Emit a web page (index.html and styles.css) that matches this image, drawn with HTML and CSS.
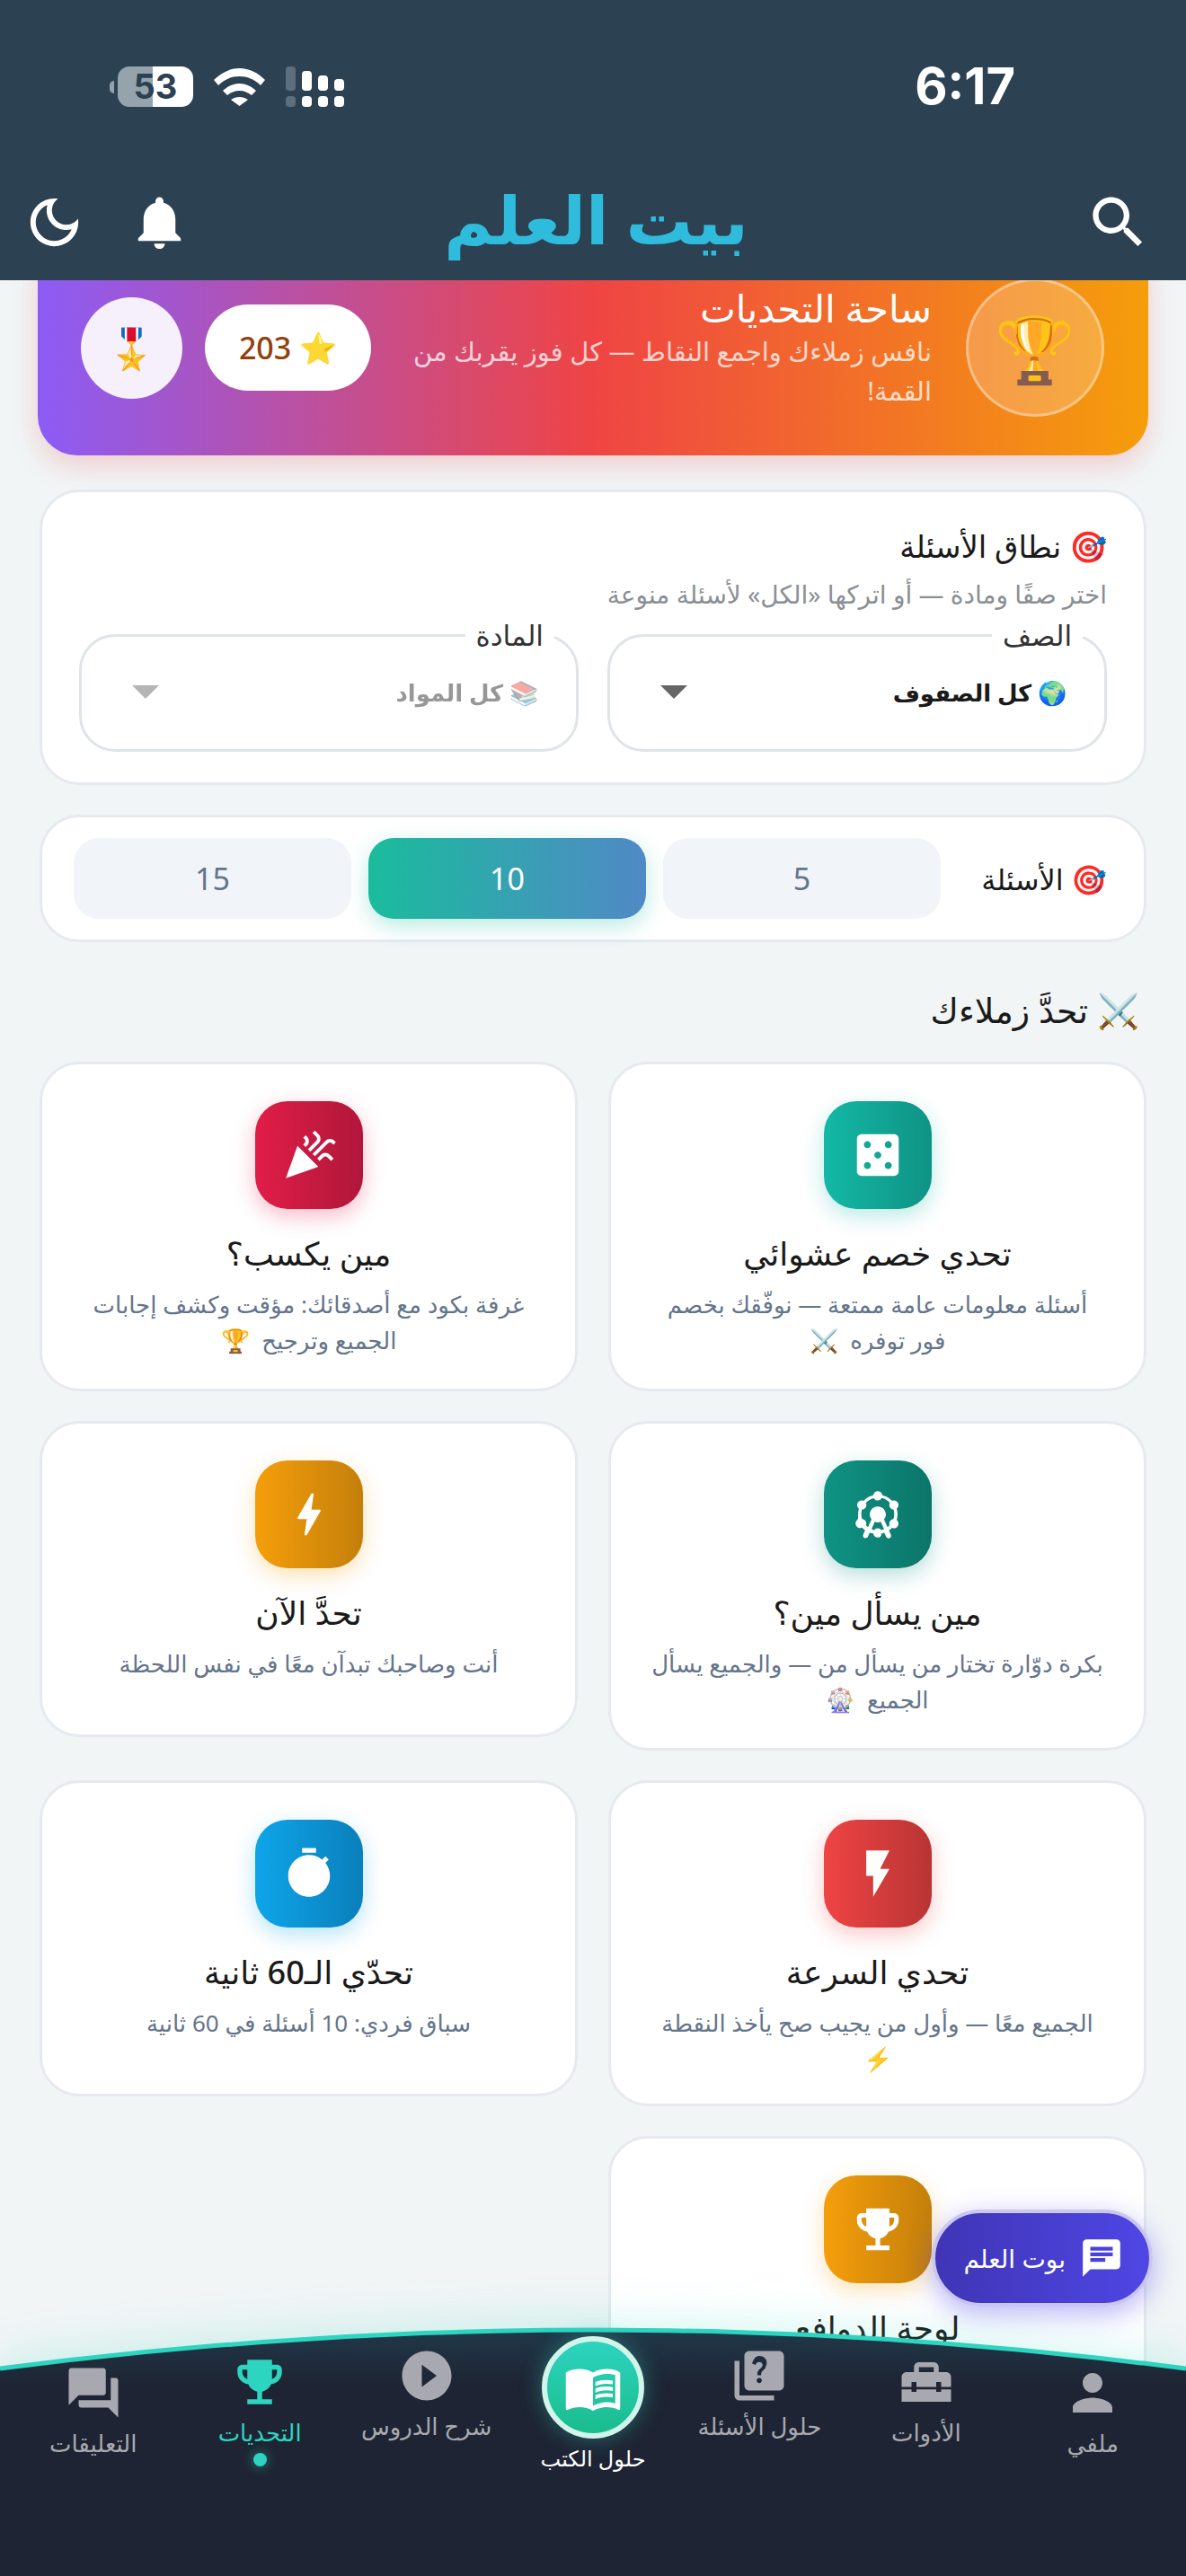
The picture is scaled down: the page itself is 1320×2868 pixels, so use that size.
FILE: index.html
```html
<!DOCTYPE html>
<html lang="ar" dir="rtl">
<head>
    <meta charset="UTF-8">
    <meta name="viewport" content="width=device-width, initial-scale=1.0">
    <title>بيت العلم</title>
    <link rel="stylesheet" href="styles.css">
</head>
<body>
<div class="app">
    <div class="topbar">
        <div class="status">
            <div class="status-icons">
                <div class="battery"><span class="battery-nub"></span><span class="battery-body">53</span></div>
                <svg class="wifi" viewBox="0 0 57 42"><path d="M0 13C8 5 18 0 28.500 0S49 5 57 13l-5 6C45 12 37 9 28.500 9S12 12 5 19z M10 25c5-5 12-8 18.500-8S42 20 47 25l-5 5c-4-3-8-5-13.500-5S19 27 15 30z M19 35c3-2 6-3 9.500-3s6.500 1 9.500 3l-9.500 7z" fill="#fff"/></svg>
                <div class="signal">
                    <div class="sig-col dim"><i class="h27"></i><b></b></div>
                    <div class="sig-col"><i class="h22"></i><b></b></div>
                    <div class="sig-col"><i class="h17"></i><b></b></div>
                    <div class="sig-col"><i class="h13"></i><b></b></div>
                </div>
            </div>
            <div class="time">6:17</div>
        </div>
        <div class="header">
            <div class="header-right">
                <svg class="ic-search" viewBox="0 0 24 24"><path d="M15.5 14h-.79l-.28-.27C15.41 12.59 16 11.11 16 9.500 16 5.910 13.090 3 9.500 3S3 5.910 3 9.500 5.910 16 9.500 16c1.610 0 3.090-.59 4.230-1.570l.27.28v.79l5 4.990L20.490 19l-4.990-5zm-6 0C7.010 14 5 11.990 5 9.500S7.010 5 9.500 5 14 7.010 14 9.500 11.990 14 9.500 14z"/></svg>
            </div>
            <h1 class="brand">بيت العلم</h1>
            <div class="header-left">
                <svg class="ic-head" viewBox="0 0 24 24"><path d="M12 22c1.100 0 2-.9 2-2h-4c0 1.100.89 2 2 2zm6-6v-5c0-3.070-1.640-5.640-4.500-6.320V4c0-.83-.67-1.500-1.500-1.500s-1.500.67-1.500 1.500v.68C7.630 5.360 6 7.920 6 11v5l-2 2v1h16v-1l-2-2z"/></svg>
                <svg class="ic-head" viewBox="0 0 24 24"><path d="M9.370 5.510C9.190 6.150 9.100 6.820 9.100 7.500c0 4.080 3.320 7.400 7.400 7.400.68 0 1.350-.09 1.990-.27C17.450 17.190 14.930 19 12 19c-3.860 0-7-3.140-7-7 0-2.930 1.810-5.450 4.370-6.490zM12 3c-4.970 0-9 4.030-9 9s4.030 9 9 9 9-4.030 9-9c0-.46-.04-.92-.1-1.360-.98 1.370-2.580 2.260-4.400 2.260-2.980 0-5.400-2.420-5.400-5.400 0-1.810.89-3.420 2.260-4.400-.44-.06-.9-.1-1.360-.1z"/></svg>
            </div>
        </div>
    </div>

    <div class="scroll">
        <div class="content">
            <div class="hero">
                <div class="hero-trophy">🏆</div>
                <div class="hero-text">
                    <h2>ساحة التحديات</h2>
                    <p>نافس زملاءك واجمع النقاط — كل فوز يقربك من<br>القمة!</p>
                </div>
                <div class="points"><span>⭐</span> 203</div>
                <div class="medal">🎖️</div>
            </div>

            <div class="card scope">
                <h3>🎯 نطاق الأسئلة</h3>
                <p class="scope-sub">اختر صفًا ومادة — أو اتركها «الكل» لأسئلة منوعة</p>
                <div class="selects">
                    <fieldset class="select">
                        <legend>الصف</legend>
                        <span>🌍 كل الصفوف</span>
                        <i class="arrow"></i>
                    </fieldset>
                    <fieldset class="select off">
                        <legend>المادة</legend>
                        <span>📚 كل المواد</span>
                        <i class="arrow"></i>
                    </fieldset>
                </div>
            </div>

            <div class="card count">
                <div class="count-label">🎯 الأسئلة</div>
                <div class="count-btn">5</div>
                <div class="count-btn active">10</div>
                <div class="count-btn">15</div>
            </div>

            <h3 class="section-title">⚔️ تحدَّ زملاءك</h3>

            <div class="games">
                <div class="game">
                    <div class="game-icon teal"><svg viewBox="0 0 24 24"><path d="M19 3H5c-1.100 0-2 .9-2 2v14c0 1.100.9 2 2 2h14c1.100 0 2-.9 2-2V5c0-1.100-.9-2-2-2zM7.500 18c-.83 0-1.500-.67-1.500-1.500S6.670 15 7.500 15s1.500.67 1.500 1.500S8.330 18 7.500 18zm0-9C6.670 9 6 8.330 6 7.500S6.670 6 7.500 6 9 6.670 9 7.500 8.330 9 7.500 9zm4.500 4.500c-.83 0-1.500-.67-1.500-1.500s.67-1.500 1.500-1.500 1.500.67 1.500 1.500-.67 1.500-1.500 1.500zm4.500 4.500c-.83 0-1.500-.67-1.500-1.500s.67-1.500 1.500-1.500 1.500.67 1.500 1.500-.67 1.500-1.500 1.500zm0-9c-.83 0-1.500-.67-1.500-1.500S15.670 6 16.500 6s1.500.67 1.500 1.500S17.330 9 16.500 9z"/></svg></div>
                    <h4>تحدي خصم عشوائي</h4>
                    <p>أسئلة معلومات عامة ممتعة — نوفّقك بخصم فور توفره &nbsp;⚔️</p>
                </div>
                <div class="game">
                    <div class="game-icon rose"><svg viewBox="0 0 24 24"><path d="M2 22l14-5-9-9zM14.530 12.530l5.590-5.590c.49-.49 1.280-.49 1.770 0l.59.59 1.060-1.060-.59-.59c-1.070-1.070-2.820-1.070-3.890 0l-5.590 5.590zM10.060 6.880l-.59.59 1.060 1.060.59-.59c1.070-1.070 1.070-2.820 0-3.890l-.59-.59-1.060 1.070.59.59c.48.48.48 1.280 0 1.760zM17.060 11.880l-1.590 1.590 1.060 1.060 1.590-1.590c.49-.49 1.280-.49 1.770 0l1.610 1.610 1.060-1.060-1.610-1.610c-1.080-1.070-2.820-1.070-3.890 0zM15.060 5.880l-3.590 3.590 1.060 1.060 3.590-3.590c1.070-1.070 1.070-2.820 0-3.890l-1.590-1.590-1.060 1.060 1.590 1.590c.48.49.48 1.290 0 1.770z"/></svg></div>
                    <h4>مين يكسب؟</h4>
                    <p>غرفة بكود مع أصدقائك: مؤقت وكشف إجابات الجميع وترجيح &nbsp;🏆</p>
                </div>
                <div class="game">
                    <div class="game-icon pine"><svg viewBox="0 0 24 24"><path d="M10.430 18.750C10.800 18.290 11.370 18 12 18c.63 0 1.190.29 1.560.75.39-.09.76-.21 1.120-.36l-1.420-3.180c-.39.15-.82.23-1.260.23-.46 0-.9-.09-1.300-.25l-1.430 3.170c.38.18.76.31 1.160.39zM5.150 10c-.16.59-.25 1.210-.25 1.850 0 .75.12 1.470.33 2.150.63.05 1.220.4 1.560.99.33.57.35 1.230.11 1.790.27.27.56.53.87.76l1.520-3.390c-.47-.58-.75-1.320-.75-2.130 0-1.890 1.550-3.410 3.460-3.410s3.460 1.530 3.460 3.410c0 .82-.29 1.570-.78 2.160l1.500 3.350c.32-.24.62-.5.9-.79-.22-.55-.2-1.200.12-1.750.33-.57.9-.92 1.520-.99.22-.68.34-1.410.34-2.160 0-.64-.09-1.270-.25-1.860-.64-.04-1.260-.39-1.600-1-.36-.62-.35-1.360-.03-1.950-.91-.98-2.100-1.710-3.440-2.050C13.390 5.600 12.740 6 12 6s-1.390-.41-1.740-1.010C8.920 5.330 7.730 6.040 6.820 7.020 7.150 7.620 7.170 8.370 6.800 9c-.35.62-.99.97-1.650 1zM3.850 9.580C3.070 8.980 2.830 7.880 3.340 7c.51-.88 1.580-1.230 2.490-.85 1.110-1.170 2.560-2.030 4.180-2.420C10.150 2.750 10.990 2 12 2s1.850.75 1.980 1.730c1.630.39 3.070 1.240 4.180 2.420.91-.38 1.990-.03 2.490.85.51.88.27 1.980-.51 2.580.23.77.35 1.580.35 2.420s-.12 1.650-.35 2.420c.78.6 1.020 1.700.51 2.580-.51.88-1.580 1.230-2.490.85-.4.43-.85.81-1.340 1.150l.81 1.800c.25.56 0 1.220-.56 1.470-.56.25-1.220 0-1.470-.56l-.81-1.800c-.47.19-.96.34-1.470.45C13.850 21.250 13.010 22 12 22s-1.850-.75-1.980-1.730c-.51-.12-1-.27-1.470-.46l-.81 1.800c-.25.56-.91.81-1.470.56-.56-.25-.81-.91-.56-1.470l.81-1.800c-.49-.33-.94-.72-1.340-1.150-.91.38-1.990.03-2.490-.85-.51-.88-.27-1.980.51-2.580C3.620 13.650 3.500 12.840 3.500 12s.12-1.650.35-2.420z"/></svg></div>
                    <h4>مين يسأل مين؟</h4>
                    <p>بكرة دوّارة تختار من يسأل من — والجميع يسأل الجميع &nbsp;🎡</p>
                </div>
                <div class="game">
                    <div class="game-icon amber"><svg viewBox="0 0 24 24"><path d="M11 21h-1l1-7H7.500c-.58 0-.57-.32-.38-.66.19-.34.05-.08.07-.12C8.480 10.940 10.420 7.540 13 3h1l-1 7h3.500c.49 0 .56.33.47.51l-.07.15C12.960 17.550 11 21 11 21z"/></svg></div>
                    <h4>تحدَّ الآن</h4>
                    <p>أنت وصاحبك تبدآن معًا في نفس اللحظة</p>
                </div>
                <div class="game">
                    <div class="game-icon red"><svg viewBox="0 0 24 24"><path d="M7 2v11h3v9l7-12h-4l4-8z"/></svg></div>
                    <h4>تحدي السرعة</h4>
                    <p class="tight">الجميع معًا — وأول من يجيب صح يأخذ النقطة<br>⚡️</p>
                </div>
                <div class="game">
                    <div class="game-icon sky"><svg viewBox="0 0 24 24"><path d="M15 1H9v2h6V1zm-4 13h2V8h-2v6zm8.030-6.610l1.420-1.420c-.43-.51-.9-.99-1.410-1.410l-1.420 1.420C16.070 4.740 14.120 4 12 4c-4.970 0-9 4.030-9 9s4.020 9 9 9 9-4.030 9-9c0-2.120-.74-4.070-1.970-5.610z"/></svg></div>
                    <h4>تحدّي الـ60 ثانية</h4>
                    <p>سباق فردي: 10 أسئلة في 60 ثانية</p>
                </div>
                <div class="game">
                    <div class="game-icon amber"><svg viewBox="0 0 24 24"><path d="M19 5h-2V3H7v2H5c-1.100 0-2 .9-2 2v1c0 2.550 1.920 4.630 4.390 4.940.63 1.500 1.980 2.630 3.610 2.960V19H7v2h10v-2h-4v-3.100c1.630-.33 2.980-1.460 3.610-2.960C19.080 12.630 21 10.550 21 8V7c0-1.100-.9-2-2-2zM5 8V7h2v3.820C5.840 10.400 5 9.300 5 8zm14 0c0 1.300-.84 2.400-2 2.820V7h2v1z"/></svg></div>
                    <h4>لوحة الدوافع</h4>
                    <p>ترتيب الأبطال</p>
                </div>
            </div>
        </div>
    </div>

    <button class="bot">
        <svg viewBox="0 0 24 24"><path d="M20 2H4c-1.100 0-1.990.9-1.990 2L2 22l4-4h14c1.100 0 2-.9 2-2V4c0-1.100-.9-2-2-2zM6 9h12v2H6V9zm8 5H6v-2h8v2zm4-6H6V6h12v2z"/></svg>
        <span>بوت العلم</span>
    </button>

    <nav class="nav">
        <svg class="nav-bg" viewBox="0 0 1320 278" preserveAspectRatio="none">
            <defs>
                <linearGradient id="navfill" x1="0" y1="0" x2="0" y2="1">
                    <stop offset="0" stop-color="#20394a"/>
                    <stop offset="0.22" stop-color="#1e2433"/>
                </linearGradient>
            </defs>
            <path d="M0 47Q660 -39 1320 47V278H0z" fill="url(#navfill)"/>
            <path d="M0 47Q660 -39 1320 47" fill="none" stroke="#2dd4bf" stroke-width="5"/>
        </svg>
        <div class="nav-item low">
            <svg viewBox="0 0 24 24"><path d="M12 12c2.210 0 4-1.790 4-4s-1.790-4-4-4-4 1.790-4 4 1.790 4 4 4zm0 2c-2.670 0-8 1.340-8 4v2h16v-2c0-2.660-5.330-4-8-4z"/></svg>
            <span>ملفي</span>
        </div>
        <div class="nav-item mid">
            <svg viewBox="0 0 24 24"><path d="M18 16H16V15H8V16H6V15H2V20H22V15H18V16M20 8H17V6C17 4.900 16.100 4 15 4H9C7.900 4 7 4.900 7 6V8H4C2.900 8 2 8.900 2 10V14H6V12H8V14H16V12H18V14H22V10C22 8.900 21.100 8 20 8M15 8H9V6H15V8Z"/></svg>
            <span>الأدوات</span>
        </div>
        <div class="nav-item high">
            <svg viewBox="0 0 24 24"><path d="M4 6H2v14c0 1.100.9 2 2 2h14v-2H4V6zm16-4H8c-1.100 0-2 .9-2 2v12c0 1.100.9 2 2 2h12c1.100 0 2-.9 2-2V4c0-1.100-.9-2-2-2zm-7.990 13c-.59 0-1.050-.47-1.050-1.050 0-.59.47-1.040 1.050-1.040.59 0 1.040.45 1.040 1.040-.01.58-.45 1.050-1.040 1.050zm2.500-6.170c-.63.93-1.230 1.210-1.560 1.810-.13.24-.18.4-.18 1.180h-1.520c0-.41-.06-1.080.26-1.650.41-.73 1.180-1.160 1.630-1.800.48-.68.21-1.940-1.140-1.940-.88 0-1.320.67-1.500 1.230l-1.370-.57C9.480 5.550 10.430 4 11.990 4c1.310 0 2.220.6 2.680 1.350.39.64.62 1.840.02 2.730z"/></svg>
            <span>حلول الأسئلة</span>
        </div>
        <div class="nav-item center">
            <div class="nav-book"><svg viewBox="0 0 24 24"><path d="M21 5c-1.110-.35-2.330-.5-3.500-.5-1.950 0-4.050.4-5.500 1.500-1.450-1.100-3.550-1.500-5.500-1.500S2.450 4.900 1 6v14.650c0 .25.25.5.5.5.1 0 .15-.05.25-.05C3.100 20.450 5.050 20 6.500 20c1.950 0 4.050.4 5.500 1.500 1.350-.85 3.800-1.500 5.500-1.500 1.650 0 3.350.3 4.750 1.050.1.05.15.05.25.05.25 0 .5-.25.5-.5V6c-.6-.45-1.250-.75-2-1zm0 13.500c-1.100-.35-2.300-.5-3.500-.5-1.700 0-4.150.65-5.500 1.500V8c1.350-.85 3.800-1.500 5.500-1.500 1.200 0 2.400.15 3.500.5v11.500z"/><path d="M17.500 10.500c.88 0 1.730.09 2.500.26V9.240c-.79-.15-1.640-.24-2.500-.24-1.700 0-3.240.29-4.500.83v1.660c1.130-.64 2.700-.99 4.500-.99zM13 12.490v1.660c1.130-.64 2.700-.99 4.500-.99.88 0 1.730.09 2.500.26V11.900c-.79-.15-1.640-.24-2.500-.24-1.700 0-3.240.3-4.500.83zM17.500 14.330c-1.700 0-3.240.29-4.500.83v1.660c1.130-.64 2.700-.99 4.500-.99.88 0 1.730.09 2.500.26v-1.520c-.79-.16-1.640-.24-2.500-.24z"/></svg></div>
            <span>حلول الكتب</span>
        </div>
        <div class="nav-item high">
            <svg viewBox="0 0 24 24"><path d="M12 2C6.480 2 2 6.480 2 12s4.480 10 10 10 10-4.480 10-10S17.520 2 12 2zm-2 14.500v-9l6 4.500-6 4.500z"/></svg>
            <span>شرح الدروس</span>
        </div>
        <div class="nav-item mid active">
            <svg viewBox="0 0 24 24"><path d="M19 5h-2V3H7v2H5c-1.100 0-2 .9-2 2v1c0 2.550 1.920 4.630 4.390 4.940.63 1.500 1.980 2.630 3.610 2.960V19H7v2h10v-2h-4v-3.100c1.630-.33 2.980-1.460 3.610-2.960C19.080 12.630 21 10.550 21 8V7c0-1.100-.9-2-2-2zM5 8V7h2v3.820C5.840 10.400 5 9.300 5 8zm14 0c0 1.300-.84 2.400-2 2.820V7h2v1z"/></svg>
            <span>التحديات</span>
            <i class="nav-dot"></i>
        </div>
        <div class="nav-item low">
            <svg viewBox="0 0 24 24"><path d="M21 6h-2v9H6v2c0 .55.45 1 1 1h11l4 4V7c0-.55-.45-1-1-1zm-4 6V3c0-.55-.45-1-1-1H3c-.55 0-1 .45-1 1v14l4-4h10c.55 0 1-.45 1-1z"/></svg>
            <span>التعليقات</span>
        </div>
    </nav>
</div>
</body>
</html>
```

FILE: styles.css
```css
* {
    box-sizing: border-box;
}
body {
    margin: 0;
    font-family: "Noto Sans", "DejaVu Sans", sans-serif;
    color: #1a1a1a;
}
h1, h2, h3, h4, p {
    margin: 0;
}
.app {
    position: relative;
    width: 1320px;
    height: 2868px;
    overflow: hidden;
    display: flex;
    flex-direction: column;
    background-color: #f1f5f6;
}

/* top bar */
.topbar {
    position: relative;
    z-index: 2;
    flex: none;
    height: 312px;
    padding-top: 74px;
    background-color: #2c4152;
}
.status {
    direction: ltr;
    display: flex;
    justify-content: space-between;
    align-items: center;
    height: 45px;
    padding: 0 190px 0 122px;
}
.status-icons {
    display: flex;
    align-items: center;
    gap: 23px;
}
.battery {
    display: flex;
    align-items: center;
}
.battery-nub {
    width: 5px;
    height: 14px;
    margin-right: 4px;
    border-radius: 5px 0 0 5px;
    background-color: #95a3ad;
}
.battery-body {
    width: 84px;
    height: 45px;
    border-radius: 13px;
    background: linear-gradient(90deg, #95a3ad 46%, #fff 46%);
    color: #2c4152;
    font: bold 38px/45px "Inter", "Liberation Sans", sans-serif;
    text-align: center;
}
.wifi {
    width: 57px;
    height: 42px;
}
.signal {
    display: flex;
    gap: 7px;
}
.sig-col {
    display: flex;
    flex-direction: column;
    justify-content: flex-end;
    gap: 6px;
    height: 45px;
}
.sig-col i, .sig-col b {
    display: block;
    width: 11px;
    border-radius: 4px;
    background-color: #fff;
}
.sig-col b {
    height: 12px;
}
.sig-col.dim i, .sig-col.dim b {
    background-color: #5d6f7d;
}
.h27 { height: 27px; }
.h22 { height: 22px; }
.h17 { height: 17px; }
.h13 { height: 13px; }
.time {
    color: #fff;
    font: bold 56px/45px "Inter", "Liberation Sans", sans-serif;
}
.header {
    display: grid;
    grid-template-columns: 1fr auto 1fr;
    align-items: center;
    height: 96px;
    margin-top: 80px;
    padding: 0 38px 0 25px;
}
.ic-search {
    display: block;
    width: 75px;
    height: 75px;
    fill: #fff;
}
.brand {
    padding: 0 0 6px 20px;
    color: #2fbcdc;
    font-size: 74px;
    font-weight: bold;
    line-height: 90px;
}
.header-left {
    display: flex;
    justify-content: flex-end;
}
.ic-head {
    display: block;
    width: 71px;
    height: 71px;
    fill: #fff;
    margin-right: 46px;
}

/* page content, scrolled a little under the top bar */
.scroll {
    flex: 1;
    overflow: hidden;
}
.content {
    margin-top: -45px;
    padding: 0 44px;
}
.hero {
    display: flex;
    align-items: center;
    height: 240px;
    margin: 0 -2px;
    padding: 0 49px 0 48px;
    border-radius: 44px;
    background: linear-gradient(90deg, #8b5cf6, #ef4444 50%, #f59e0b);
    box-shadow: 0 12px 30px rgba(239, 68, 68, 0.22);
}
.hero-trophy {
    flex: none;
    width: 154px;
    height: 154px;
    margin-left: 38px;
    border: 3px solid rgba(255, 255, 255, 0.35);
    border-radius: 50%;
    background-color: rgba(255, 255, 255, 0.2);
    font-size: 72px;
    line-height: 148px;
    text-align: center;
}
.hero-text {
    flex: 1;
    white-space: nowrap;
    color: #fff;
}
.hero-text h2 {
    font-size: 42px;
    font-weight: normal;
    line-height: 52px;
}
.hero-text p {
    font-size: 29px;
    line-height: 44px;
    color: rgba(255, 255, 255, 0.75);
}
.points {
    flex: none;
    width: 185px;
    height: 96px;
    margin: 0 25px;
    border-radius: 48px;
    background-color: #fff;
    color: #92400e;
    font-size: 34px;
    font-weight: 500;
    line-height: 96px;
    text-align: center;
}
.medal {
    flex: none;
    width: 113px;
    height: 113px;
    border-radius: 50%;
    background-color: #f5f0fc;
    font-size: 44px;
    line-height: 113px;
    text-align: center;
}

/* cards */
.card {
    border: 3px solid #e6eaee;
    border-radius: 44px;
    background-color: #fff;
}
.scope {
    height: 329px;
    margin-top: 38px;
    padding: 35px 41px 0;
}
.scope h3 {
    font-size: 34px;
    font-weight: normal;
    line-height: 50px;
}
.scope-sub {
    margin-top: 8px;
    color: #8a8f94;
    font-size: 28px;
    line-height: 40px;
}
.selects {
    display: grid;
    grid-template-columns: 1fr 1fr;
    gap: 32px;
    margin-top: 10px;
}
.select {
    display: flex;
    justify-content: space-between;
    align-items: center;
    height: 146px;
    margin: 0;
    padding: 0 20px 16px 56px;
    border: 3px solid #dfe4e7;
    border-radius: 40px;
    font-size: 26px;
    font-weight: bold;
}
.select legend {
    margin-right: 4px;
    padding: 0 12px;
    color: #333;
    font-size: 31px;
    font-weight: normal;
    line-height: 32px;
}
.select > span {
    flex: 1;
    padding-right: 22px;
}
.arrow {
    width: 0;
    height: 0;
    border-style: solid;
    border-width: 15px 15px 0;
    border-color: #666 transparent transparent;
}
.select.off > span {
    opacity: 0.45;
}
.select.off .arrow {
    border-top-color: #b5b5b5;
}
.count {
    display: flex;
    align-items: center;
    gap: 19px;
    height: 142px;
    margin-top: 33px;
    padding: 0 41px 0 35px;
}
.count-label {
    flex: 1;
    font-size: 32px;
}
.count-btn {
    width: 309px;
    height: 90px;
    border-radius: 28px;
    background-color: #f1f5f9;
    color: #64748b;
    font-size: 34px;
    line-height: 90px;
    text-align: center;
}
.count-btn.active {
    background: linear-gradient(90deg, #1abc9c, #5089c6);
    color: #fff;
    box-shadow: 0 8px 24px rgba(26, 188, 156, 0.3);
}
.section-title {
    margin: 50px 8px 33px 0;
    font-size: 38px;
    font-weight: normal;
    line-height: 50px;
}

/* game grid */
.games {
    display: grid;
    grid-template-columns: 1fr 1fr;
    gap: 33px 34px;
    align-items: start;
}
.game {
    padding: 41px 45px 34px;
    border: 3px solid #e6eaee;
    border-radius: 44px;
    background-color: #fff;
    text-align: center;
}
.game-icon {
    display: flex;
    justify-content: center;
    align-items: center;
    width: 120px;
    height: 120px;
    margin: 0 auto 22px;
    border-radius: 36px;
}
.game-icon svg {
    width: 62px;
    height: 62px;
    fill: #fff;
}
.teal {
    background: linear-gradient(90deg, #14b8a6, #0f9384);
    box-shadow: 0 8px 24px rgba(20, 184, 166, 0.3);
}
.rose {
    background: linear-gradient(90deg, #e11d48, #b0173a);
    box-shadow: 0 8px 24px rgba(225, 29, 72, 0.3);
}
.pine {
    background: linear-gradient(90deg, #0f9384, #0c7569);
    box-shadow: 0 8px 24px rgba(15, 147, 132, 0.3);
}
.amber {
    background: linear-gradient(90deg, #f59e0b, #c47f0a);
    box-shadow: 0 8px 24px rgba(245, 158, 11, 0.3);
}
.red {
    background: linear-gradient(90deg, #ef4444, #b93434);
    box-shadow: 0 8px 24px rgba(239, 68, 68, 0.3);
}
.sky {
    background: linear-gradient(90deg, #0ea5e9, #0a7fbb);
    box-shadow: 0 8px 24px rgba(14, 165, 233, 0.3);
}
.game h4 {
    font-size: 36px;
    font-weight: 500;
    line-height: 56px;
}
.game p {
    min-height: 65px;
    margin-top: 8px;
    color: #64748b;
    font-size: 26px;
    line-height: 40px;
}
.game p.tight {
    margin-bottom: -4px;
}

/* floating chat button */
.bot {
    position: absolute;
    z-index: 3;
    left: 1037px;
    top: 2460px;
    display: flex;
    align-items: center;
    gap: 15px;
    width: 246px;
    height: 108px;
    padding: 0 28px 0 0;
    border: 4px solid #c9c6f0;
    border-radius: 54px;
    background: linear-gradient(90deg, #3f35b5, #4f46e5);
    box-shadow: 0 8px 30px rgba(79, 70, 229, 0.4);
    color: #fff;
    font-family: inherit;
    font-size: 28px;
    white-space: nowrap;
}
.bot svg {
    width: 50px;
    height: 50px;
    fill: #fff;
}

/* bottom navigation */
.nav {
    position: absolute;
    z-index: 4;
    left: 0;
    right: 0;
    bottom: 0;
    height: 278px;
    display: grid;
    grid-template-columns: repeat(7, 1fr);
    padding: 0 11px;
}
.nav-bg {
    position: absolute;
    left: 0;
    top: 0;
    width: 1320px;
    height: 278px;
    overflow: visible;
    filter: drop-shadow(0 -10px 22px rgba(45, 212, 191, 0.18));
}
.nav-item {
    position: relative;
    display: flex;
    flex-direction: column;
    align-items: center;
    color: #a8a9b0;
    font-size: 26px;
    line-height: 40px;
    white-space: nowrap;
}
.nav-item svg {
    flex: none;
    width: 66px;
    height: 66px;
    margin-bottom: 3px;
    fill: #a8a9b0;
}
.nav-item.high { padding-top: 22px; }
.nav-item.mid { padding-top: 29px; }
.nav-item.low { padding-top: 41px; }
.nav-item.center {
    padding-top: 11px;
    color: #fff;
    font-size: 24px;
}
.nav-book {
    display: flex;
    justify-content: center;
    align-items: center;
    width: 114px;
    height: 114px;
    margin-bottom: 2px;
    border: 6px solid #d1f5ea;
    border-radius: 50%;
    background: linear-gradient(180deg, #2dd4bf, #1abc8c);
    box-shadow: 0 0 24px rgba(45, 212, 191, 0.4);
}
.nav-book svg {
    width: 66px;
    height: 66px;
    margin: 0;
    fill: #fff;
}
.nav-item.active {
    color: #2dd4bf;
}
.nav-item.active svg {
    fill: #2dd4bf;
}
.nav-dot {
    width: 15px;
    height: 15px;
    margin-top: 3px;
    border-radius: 50%;
    background-color: #2dd4bf;
    box-shadow: 0 0 14px rgba(45, 212, 191, 0.6);
}
```
